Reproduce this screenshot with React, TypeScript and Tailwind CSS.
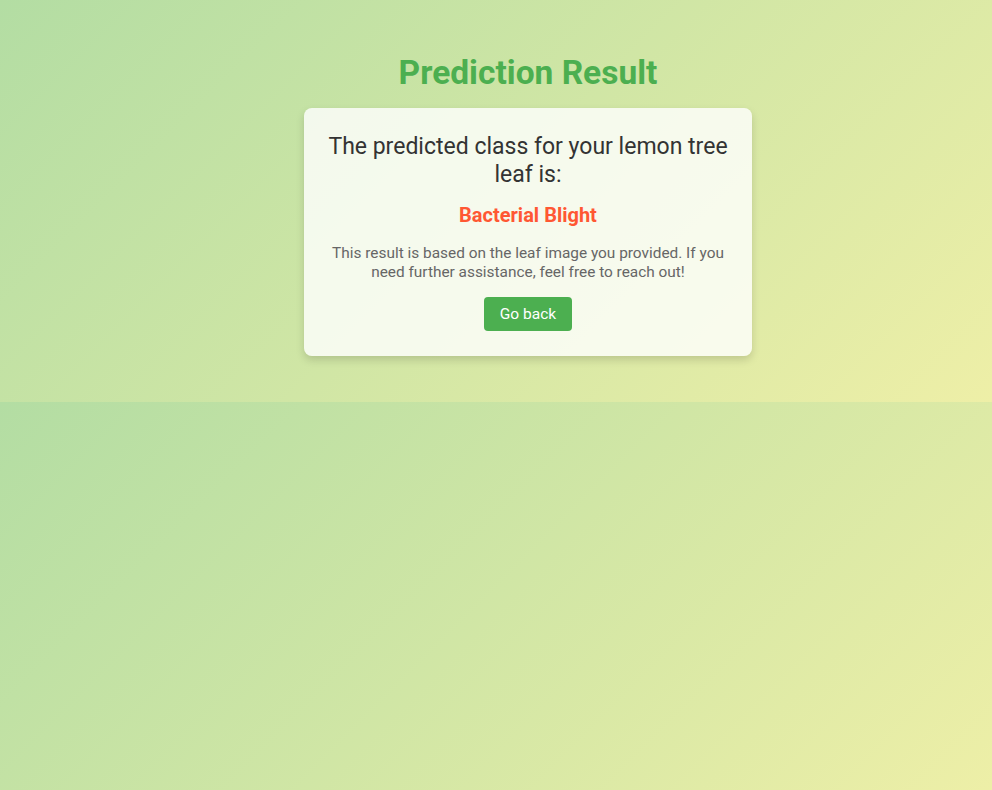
import React from "react";

const App: React.FC = () => {
  return (
    <div
      className="min-h-[790px] w-full bg-[linear-gradient(135deg,#b3dda3,#eeefa7)] bg-size-[100%_402px] bg-repeat font-['Roboto',sans-serif]"
    >
      <div className="flex h-[402px] flex-col items-center pl-16 pt-[54px]">
        <h1 className="mb-4 text-[33.5px] font-bold leading-[38px] text-[#4caf50]">
          Prediction Result
        </h1>
        <div className="w-[448px] rounded-lg bg-white/80 px-6 pt-[25px] pb-[25px] text-center shadow-[0_4px_8px_rgba(0,0,0,0.15)]">
          <h2 className="text-[23px] leading-[28px] text-[#333]">
            The predicted class for your lemon tree leaf is:
          </h2>
          <p className="mt-[14px] text-[20px] font-bold leading-[24px] text-[#ff5733]">
            Bacterial Blight
          </p>
          <p className="mt-[17px] text-[15.4px] leading-[19px] text-[#666]">
            This result is based on the leaf image you provided. If you need
            further assistance, feel free to reach out!
          </p>
          <button className="mt-[15px] h-[34px] rounded-[4px] bg-[#4caf50] px-4 pt-px text-[15.5px] text-white">
            Go back
          </button>
        </div>
      </div>
    </div>
  );
};

export default App;
